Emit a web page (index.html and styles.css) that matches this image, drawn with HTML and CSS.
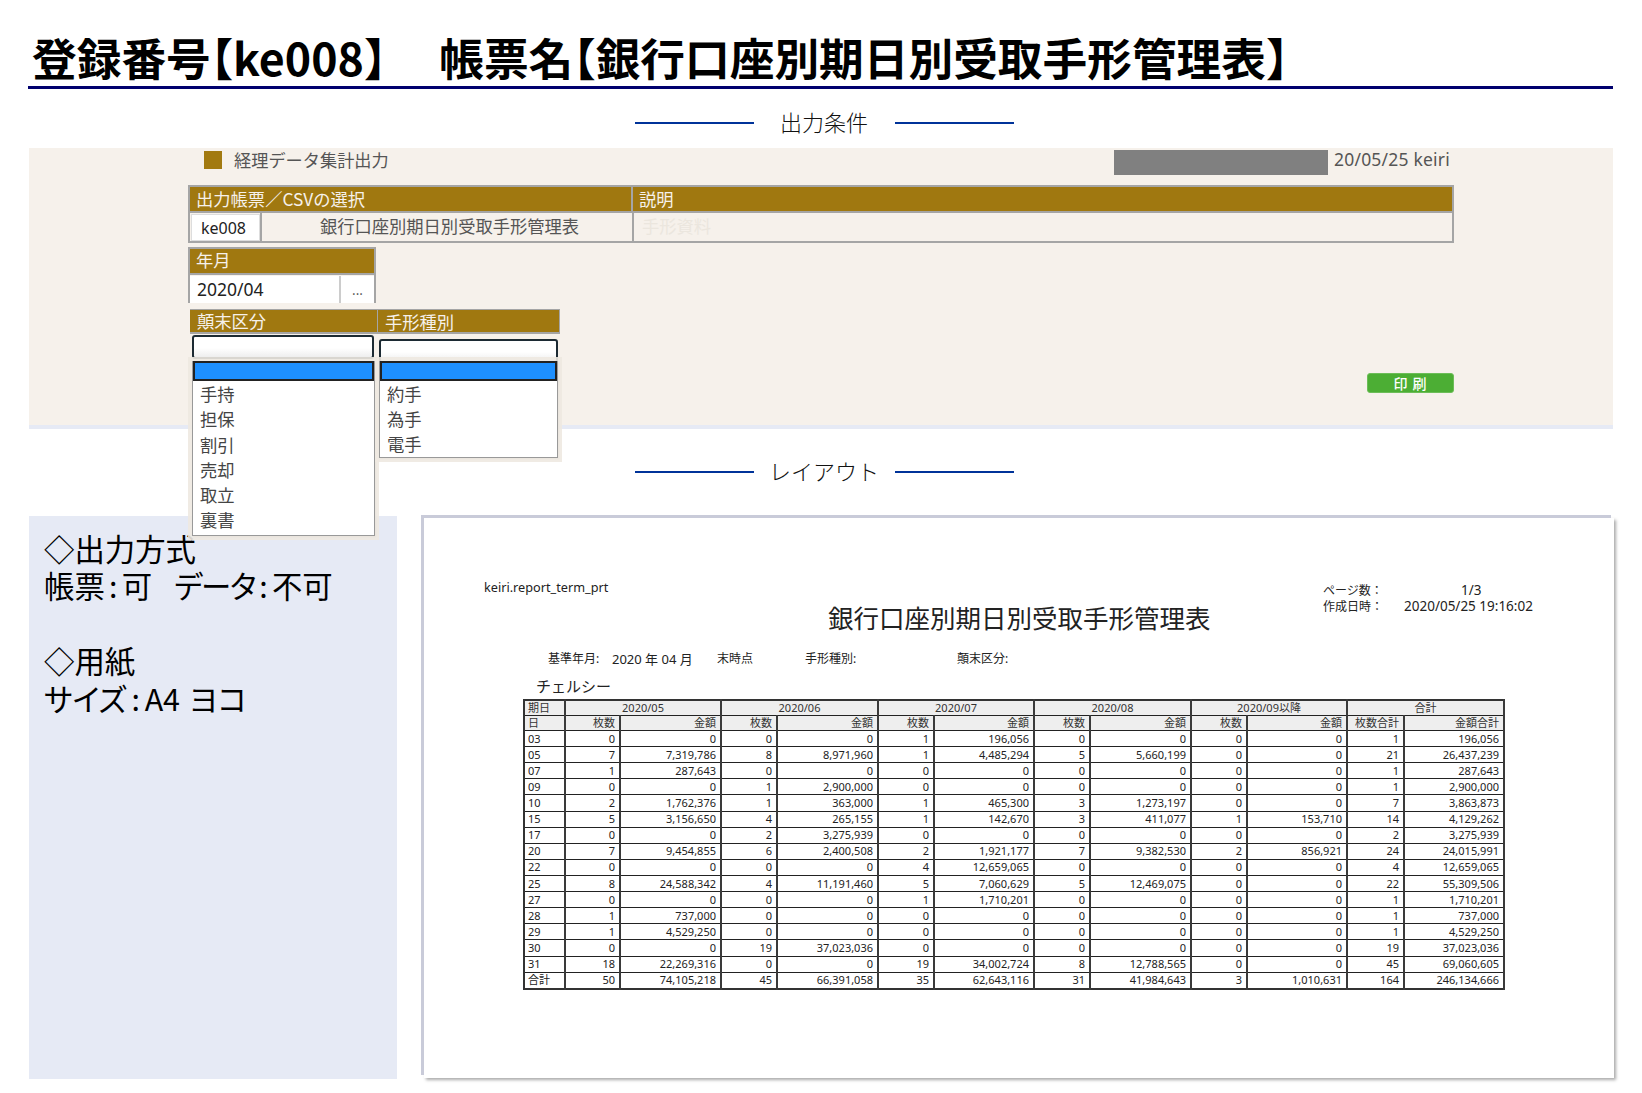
FILE: index.html
```html
<!DOCTYPE html>
<html lang="ja">
<head>
	<meta charset="UTF-8">
	<title>ke008</title>
	<link rel="stylesheet" href="styles.css">
</head>
<body>
	<h1 class="page-title">登録番号<span class="br">【</span>ke008<span class="br">】</span><span class="title-2">帳票名</span><span class="br">【</span>銀行口座別期日別受取手形管理表<span class="br">】</span></h1>

	<div class="sec-head"><span class="sec-line"></span><span class="sec-text">出力条件</span><span class="sec-line"></span></div>

	<section class="cond">
		<div class="cond-inner">
			<div class="app-bar">
				<span class="app-mark"></span>
				<span class="app-name">経理データ集計出力</span>
				<span class="app-mask"></span>
				<span class="app-user">20/05/25 keiri</span>
			</div>

			<div class="box box-report">
				<div class="box-head">
					<span class="col-sel">出力帳票／CSVの選択</span>
					<span class="col-desc">説明</span>
				</div>
				<div class="box-row">
					<span class="cell-code">ke008</span>
					<span class="cell-name">銀行口座別期日別受取手形管理表</span>
					<span class="cell-desc">手形資料</span>
				</div>
			</div>

			<div class="box box-month">
				<div class="box-head"><span class="col-sel">年月</span></div>
				<div class="box-row">
					<span class="cell-month">2020/04</span>
					<span class="cell-more">...</span>
				</div>
			</div>

			<div class="filters">
				<div class="filter filter-l">
					<div class="filter-head">顛末区分</div>
					<div class="select"></div>
					<ul class="options">
						<li class="on"></li>
						<li>手持</li>
						<li>担保</li>
						<li>割引</li>
						<li>売却</li>
						<li>取立</li>
						<li>裏書</li>
					</ul>
				</div>
				<div class="filter filter-r">
					<div class="filter-head">手形種別</div>
					<div class="select"></div>
					<ul class="options">
						<li class="on"></li>
						<li>約手</li>
						<li>為手</li>
						<li>電手</li>
					</ul>
				</div>
			</div>

			<div class="print-row"><button class="print-btn" type="button">印 刷</button></div>
		</div>
	</section>

	<div class="sec-head sec-head2"><span class="sec-line"></span><span class="sec-text">レイアウト</span><span class="sec-line"></span></div>

	<div class="layout">
		<aside class="note">
			<p>◇出力方式</p>
			<p>帳票<span class="colon">:</span>可<span class="note-gap"></span><span class="pa pa-tight">データ</span><span class="colon">:</span>不可</p>
			<p>&nbsp;</p>
			<p>◇用紙</p>
			<p><span class="pa">サイズ</span><span class="colon colon-s">:</span>A4<span class="note-gap2"></span><span class="pa">ヨコ</span></p>
		</aside>

		<section class="paper">
			<div class="rep-top">
				<div class="rep-id">keiri.report_term_prt</div>
				<div class="rep-meta">
					<div><span class="meta-k">ページ数：</span><span class="meta-v meta-page">1/3</span></div>
					<div><span class="meta-k">作成日時：</span><span class="meta-v">2020/05/25 19:16:02</span></div>
				</div>
			</div>
			<h2 class="rep-title">銀行口座別期日別受取手形管理表</h2>
			<div class="rep-cond">
				<span class="c1">基準年月:</span>
				<span class="c2">2020 年 04 月</span>
				<span class="c3">末時点</span>
				<span class="c4">手形種別:</span>
				<span class="c5">顛末区分:</span>
			</div>
			<div class="rep-bank">チェルシー</div>

			<table class="rep-table">
				<colgroup>
					<col class="w-day">
					<col class="w-n1"><col class="w-a1"><col class="w-n"><col class="w-a1"><col class="w-n"><col class="w-a">
					<col class="w-n"><col class="w-a1"><col class="w-n"><col class="w-a"><col class="w-n3"><col class="w-a">
				</colgroup>
				<thead>
					<tr><th class="l">期日</th><th colspan="2">2020/05</th><th colspan="2">2020/06</th><th colspan="2">2020/07</th><th colspan="2">2020/08</th><th colspan="2">2020/09以降</th><th colspan="2">合計</th></tr>
					<tr><th class="l">日</th><th class="r">枚数</th><th class="r">金額</th><th class="r">枚数</th><th class="r">金額</th><th class="r">枚数</th><th class="r">金額</th><th class="r">枚数</th><th class="r">金額</th><th class="r">枚数</th><th class="r">金額</th><th class="r">枚数合計</th><th class="r">金額合計</th></tr>
				</thead>
				<tbody>
					<tr><td>03</td><td>0</td><td>0</td><td>0</td><td>0</td><td>1</td><td>196,056</td><td>0</td><td>0</td><td>0</td><td>0</td><td>1</td><td>196,056</td></tr>
					<tr><td>05</td><td>7</td><td>7,319,786</td><td>8</td><td>8,971,960</td><td>1</td><td>4,485,294</td><td>5</td><td>5,660,199</td><td>0</td><td>0</td><td>21</td><td>26,437,239</td></tr>
					<tr><td>07</td><td>1</td><td>287,643</td><td>0</td><td>0</td><td>0</td><td>0</td><td>0</td><td>0</td><td>0</td><td>0</td><td>1</td><td>287,643</td></tr>
					<tr><td>09</td><td>0</td><td>0</td><td>1</td><td>2,900,000</td><td>0</td><td>0</td><td>0</td><td>0</td><td>0</td><td>0</td><td>1</td><td>2,900,000</td></tr>
					<tr><td>10</td><td>2</td><td>1,762,376</td><td>1</td><td>363,000</td><td>1</td><td>465,300</td><td>3</td><td>1,273,197</td><td>0</td><td>0</td><td>7</td><td>3,863,873</td></tr>
					<tr><td>15</td><td>5</td><td>3,156,650</td><td>4</td><td>265,155</td><td>1</td><td>142,670</td><td>3</td><td>411,077</td><td>1</td><td>153,710</td><td>14</td><td>4,129,262</td></tr>
					<tr><td>17</td><td>0</td><td>0</td><td>2</td><td>3,275,939</td><td>0</td><td>0</td><td>0</td><td>0</td><td>0</td><td>0</td><td>2</td><td>3,275,939</td></tr>
					<tr><td>20</td><td>7</td><td>9,454,855</td><td>6</td><td>2,400,508</td><td>2</td><td>1,921,177</td><td>7</td><td>9,382,530</td><td>2</td><td>856,921</td><td>24</td><td>24,015,991</td></tr>
					<tr><td>22</td><td>0</td><td>0</td><td>0</td><td>0</td><td>4</td><td>12,659,065</td><td>0</td><td>0</td><td>0</td><td>0</td><td>4</td><td>12,659,065</td></tr>
					<tr><td>25</td><td>8</td><td>24,588,342</td><td>4</td><td>11,191,460</td><td>5</td><td>7,060,629</td><td>5</td><td>12,469,075</td><td>0</td><td>0</td><td>22</td><td>55,309,506</td></tr>
					<tr><td>27</td><td>0</td><td>0</td><td>0</td><td>0</td><td>1</td><td>1,710,201</td><td>0</td><td>0</td><td>0</td><td>0</td><td>1</td><td>1,710,201</td></tr>
					<tr><td>28</td><td>1</td><td>737,000</td><td>0</td><td>0</td><td>0</td><td>0</td><td>0</td><td>0</td><td>0</td><td>0</td><td>1</td><td>737,000</td></tr>
					<tr><td>29</td><td>1</td><td>4,529,250</td><td>0</td><td>0</td><td>0</td><td>0</td><td>0</td><td>0</td><td>0</td><td>0</td><td>1</td><td>4,529,250</td></tr>
					<tr><td>30</td><td>0</td><td>0</td><td>19</td><td>37,023,036</td><td>0</td><td>0</td><td>0</td><td>0</td><td>0</td><td>0</td><td>19</td><td>37,023,036</td></tr>
					<tr><td>31</td><td>18</td><td>22,269,316</td><td>0</td><td>0</td><td>19</td><td>34,002,724</td><td>8</td><td>12,788,565</td><td>0</td><td>0</td><td>45</td><td>69,060,605</td></tr>
					<tr><td>合計</td><td>50</td><td>74,105,218</td><td>45</td><td>66,391,058</td><td>35</td><td>62,643,116</td><td>31</td><td>41,984,643</td><td>3</td><td>1,010,631</td><td>164</td><td>246,134,666</td></tr>
				</tbody>
			</table>
		</section>
	</div>
</body>
</html>
```

FILE: styles.css
```css
* {
	box-sizing: border-box;
}
html, body {
	margin: 0;
	padding: 0;
}
body {
	width: 1642px;
	height: 1093px;
	overflow: hidden;
	background: #fff;
	color: #000;
	font-family: "Noto Sans", "Noto Sans CJK JP", sans-serif;
}
p, ul, h1, h2 {
	margin: 0;
	padding: 0;
}

/* title */
.page-title {
	margin: 0 29px 0 28px;
	padding: 27px 0 0 4px;
	height: 89px;
	border-bottom: 3px solid #00006e;
	font: bold 44.7px/60px "Noto Sans CJK JP", sans-serif;
	white-space: nowrap;
	overflow: hidden;
}
.page-title .br {
	font-feature-settings: "halt";
}
.title-2 {
	margin-left: 53px;
}

/* section heading with lines */
.sec-head {
	display: flex;
	align-items: center;
	justify-content: center;
	margin: 18px 0 0 0;
	height: 32px;
	width: 1648px;
}
.sec-line {
	width: 119px;
	height: 2px;
	background: #003399;
}
.sec-text {
	width: 141px;
	height: 32px;
	margin-top: -4px;
	text-align: center;
	font: 300 22px/32px "Noto Sans CJK JP", sans-serif;
	color: #111;
}
.sec-head2 {
	margin-top: 27px;
}

/* conditions panel */
.cond {
	margin: 9px 29px 0 29px;
	height: 281px;
	background: #f6f1eb;
	border-bottom: 4px solid #e6eaf5;
	padding-left: 159px;
	font-family: "Noto Sans CJK JP", sans-serif;
}
.cond-inner {
	width: 1266px;
}
.app-bar {
	display: flex;
	align-items: center;
	height: 37px;
	padding: 0 0 15px 16px;
	color: #555;
	font-size: 17.2px;
}
.app-mark {
	width: 18px;
	height: 18px;
	margin-top: 1px;
	background: #a27a10;
	margin-right: 12px;
}
.app-name {
	width: 880px;
}
.app-mask {
	width: 214px;
	height: 25px;
	margin-top: 7px;
	background: #808080;
}
.app-user {
	margin-left: 6px;
	font-family: "Noto Sans", sans-serif;
	font-size: 17.5px;
	letter-spacing: 0.2px;
}

.box {
	border: 2px solid #a5a5a5;
	border-top-width: 1px;
}
.box-head {
	display: flex;
	height: 27px;
	background: #a07810;
	border-top: 1px solid #a5a5a5;
	border-bottom: 2px solid #a5a5a5;
	color: #f6f1eb;
	font-size: 17.3px;
	line-height: 24px;
}
.col-sel {
	width: 441px;
	padding-left: 6px;
}
.col-desc {
	flex: 1;
	padding-left: 6px;
	border-left: 2px solid #a5a5a5;
}
.box-row {
	display: flex;
	height: 28px;
	font-size: 17.3px;
	line-height: 26px;
	color: #555;
}
.cell-code {
	width: 69px;
	margin: 1px 0 0 1px;
	padding-left: 9px;
	background: #fff;
	border: 1px solid #ddd;
	color: #222;
	font-family: "Noto Sans", sans-serif;
	font-size: 16px;
}
.cell-name {
	width: 372px;
	text-align: center;
	border-left: 2px solid #a5a5a5;
	padding-left: 5px;
}
.cell-desc {
	flex: 1;
	padding-left: 8px;
	border-left: 2px solid #a5a5a5;
	color: #ebe6de;
}
.box-report {
	height: 58px;
}
.box-month {
	width: 188px;
	margin-top: 4px;
	height: 56px;
}
.box-month .box-head {
	line-height: 22px;
}
.cell-month {
	flex: 1;
	background: #fff;
	margin-top: 1px;
	padding-left: 7px;
	color: #222;
	font-family: "Noto Sans", sans-serif;
	font-size: 17.5px;
}
.cell-more {
	width: 35px;
	margin-top: 1px;
	background: #fff;
	border-left: 2px solid #ccc;
	text-align: center;
	font-size: 13px;
	line-height: 28px;
	color: #444;
}

/* selects; lists hang over what is below */
.filters {
	display: flex;
	width: 372px;
	margin: 6px 0 0 2px;
	align-items: flex-start;
}
.filter {
	position: relative;
	flex: none;
}
.filter-l {
	width: 187px;
}
.filter-r {
	width: 183px;
}
.filter-head {
	height: 25px;
	background: #a07810;
	color: #f6f1eb;
	font-size: 17.3px;
	line-height: 24px;
	padding-left: 7px;
	border-top: 1px solid #a5a5a5;
	border-bottom: 2px solid #a5a5a5;
}
.filter-l .filter-head {
	line-height: 21px;
}
.filter-r .filter-head {
	border-left: 1px solid #a5a5a5;
	border-right: 1px solid #a5a5a5;
}
.select {
	height: 24px;
	margin: 1px 3px 0 2px;
	border: 2px solid #1c2a33;
	border-radius: 3px;
	background: linear-gradient(#fff 55%, #eee);
}
.filter-r .select {
	margin: 5px 2px 0 2px;
}
.options {
	position: absolute;
	left: 2px;
	right: 2px;
	top: 52px;
	z-index: 2;
	list-style: none;
	background: #fff;
	border: 1px solid #999;
	border-top: 0;
	box-shadow: 0 0 0 4px rgba(238, 233, 225, 0.9), 1px 1px 2px #aaa;
	font-size: 17.3px;
	line-height: 25px;
	color: #444;
	padding-bottom: 2px;
}
.options li {
	padding-left: 7px;
	height: 25.3px;
}
.filter-r .options li {
	height: 24.8px;
}
.options .on,
.filter-r .options .on {
	height: 20px;
	background: #1e90ff;
	border: 2px solid #222;
}

.print-row {
	display: flex;
	justify-content: flex-end;
	margin-top: 10px;
}
.print-btn {
	width: 87px;
	height: 20px;
	padding: 0;
	border: 1px solid #6cbd58;
	border-radius: 3px;
	background: #4cae34;
	color: #fff;
	font: 500 14px/18px "Noto Sans CJK JP", sans-serif;
	letter-spacing: 1px;
}

/* lower half */
.layout {
	display: flex;
	margin: 27px 28px 0 29px;
}
.note {
	width: 368px;
	height: 563px;
	margin-top: 1px;
	background: #e6eaf5;
	padding: 14px 0 0 15px;
	font: 30.4px/37.4px "Noto Sans CJK JP", sans-serif;
	white-space: nowrap;
}
.note p {
	height: 37.4px;
}
.pa {
	font-feature-settings: "palt";
}
.pa-tight {
	letter-spacing: -1.4px;
}
.colon {
	display: inline-block;
	width: 17px;
	text-align: center;
}
.colon-s {
	width: 18px;
}
.note-gap {
	display: inline-block;
	width: 22px;
}
.note-gap2 {
	display: inline-block;
	width: 9px;
}
.paper {
	width: 1190px;
	height: 560px;
	margin: 3px 0 0 27px;
	background: #fff;
	box-shadow: -3px -3px 0 #c9cbd9, 2px 2px 3px #aaa;
	padding: 0 0 0 60px;
	color: #222;
}
.rep-top {
	display: flex;
	height: 67px;
	padding-top: 61px;
	font-size: 12.7px;
	line-height: 16px;
}
.rep-id {
	width: 839px;
}
.rep-meta {
	margin-top: 3px;
	white-space: nowrap;
}
.meta-k {
	display: inline-block;
	width: 81px;
	font-family: "Noto Sans CJK JP", sans-serif;
	font-size: 12px;
}
.meta-v {
	display: inline-block;
	font-size: 13.5px;
}
.meta-page {
	padding-left: 57px;
}
.rep-title {
	margin: 14px 0 0 344px;
	font: 400 25.5px/36px "Noto Sans CJK JP", sans-serif;
	white-space: nowrap;
}
.rep-cond {
	display: flex;
	height: 18px;
	margin: 15px 0 0 64px;
	font-size: 12px;
	line-height: 18px;
	white-space: nowrap;
}
.rep-cond span {
	flex: none;
}
.c1 { width: 64px; }
.c2 { width: 105px; font-size: 13px; }
.c3 { width: 88px; }
.c4 { width: 152px; }
.rep-bank {
	margin: 8px 0 0 52px;
	height: 22px;
	font-size: 15px;
	line-height: 20px;
}
.rep-table {
	margin: 1px 0 0 39px;
	width: 980px;
	height: 291px;
	table-layout: fixed;
	border-collapse: collapse;
	border: 2px solid #333;
	font-size: 11px;
	line-height: 14px;
}
.w-day { width: 41px; }
.w-n1 { width: 55px; }
.w-n { width: 56px; }
.w-n3 { width: 57px; }
.w-a { width: 100px; }
.w-a1 { width: 101px; }
.rep-table th, .rep-table td {
	padding: 0 4px;
	border: 1px solid #222;
	border-right-width: 2px;
	border-right-color: #3a3a3a;
	text-align: right;
	font-weight: 400;
	white-space: nowrap;
	overflow: hidden;
}
.rep-table th {
	text-align: center;
	background: #eee;
	color: #333;
}
.rep-table th.l, .rep-table td:first-child {
	text-align: left;
	padding-left: 3px;
}
.rep-table th.r {
	text-align: right;
}
```
